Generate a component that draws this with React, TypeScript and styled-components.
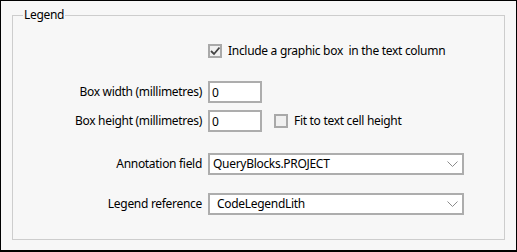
import React, { useState } from 'react';
import styled, { createGlobalStyle } from 'styled-components';

const GlobalStyle = createGlobalStyle`
  html, body {
    margin: 0;
    padding: 0;
    background: #f7f7f7;
  }
  body {
    font-family: "Noto Sans", "Open Sans", sans-serif;
    font-size: 12px;
    letter-spacing: -0.3px;
    color: #000;
  }
`;

const Window = styled.div`
  box-sizing: border-box;
  width: 517px;
  height: 252px;
  border: 1px solid #000;
  border-bottom-width: 2px;
  background: #f7f7f7;
  padding: 6px 11px 10px 11px;
  display: flex;
  flex-direction: column;
`;

const GroupBox = styled.fieldset`
  flex: 1;
  margin: 0;
  padding: 0;
  min-width: 0;
  border: 1px solid #cdcdcd;
  display: flex;
  flex-direction: column;
`;

const GroupTitle = styled.legend`
  margin-left: 10px;
  padding: 0 1px;
  line-height: 16px;
  font-size: 12px;
`;

const Row = styled.div<{ $top: number }>`
  display: grid;
  grid-template-columns: 189px auto;
  column-gap: 6px;
  align-items: center;
  margin-top: ${p => p.$top}px;
`;

const Label = styled.label`
  text-align: right;
  white-space: nowrap;
  line-height: 16px;
`;

const Controls = styled.div`
  display: flex;
  align-items: center;
`;

const CheckLabel = styled.label<{ $indent?: number }>`
  display: flex;
  align-items: center;
  gap: 6px;
  margin-left: ${p => p.$indent || 0}px;
  white-space: pre;
  line-height: 16px;
  cursor: default;
`;

const CheckBox = styled.span`
  box-sizing: border-box;
  width: 14px;
  height: 14px;
  border: 2px solid #a9a9a9;
  background: #f0f0f0;
  display: flex;
  align-items: center;
  justify-content: center;
  flex: none;
`;

const TextInput = styled.input`
  box-sizing: border-box;
  width: 54px;
  height: 22px;
  border: 2px solid #adadad;
  background: #fff;
  padding: 0 2px;
  font: inherit;
  letter-spacing: inherit;
  color: #000;
  outline: none;
`;

const Combo = styled.div<{ $pad: number }>`
  box-sizing: border-box;
  width: 256px;
  height: 22px;
  border: 2px solid #adadad;
  background: #fff;
  display: flex;
  align-items: center;
  padding-left: ${p => p.$pad}px;
  padding-right: 4px;
`;

const ComboText = styled.span`
  flex: 1;
  line-height: 16px;
`;

const Chevron = () => (
  <svg width="11" height="6" viewBox="0 0 11 6">
    <path d="M0.5 0.5 L5.5 5.5 L10.5 0.5" fill="none" stroke="#8c8c8c" strokeWidth="1" />
  </svg>
);

const Tick = () => (
  <svg width="10" height="10" viewBox="0 0 10 10">
    <path d="M1 5 L4 8 L9.5 1.5" fill="none" stroke="#444" strokeWidth="1.8" />
  </svg>
);

const Check: React.FC<{ checked: boolean; onToggle: () => void; text: string; indent?: number }> = ({
  checked,
  onToggle,
  text,
  indent,
}) => (
  <CheckLabel $indent={indent} onClick={onToggle}>
    <CheckBox>{checked && <Tick />}</CheckBox>
    <span>{text}</span>
  </CheckLabel>
);

export default function App() {
  const [includeBox, setIncludeBox] = useState(true);
  const [fitCell, setFitCell] = useState(false);
  const [width, setWidth] = useState('0');
  const [height, setHeight] = useState('0');

  return (
    <>
      <GlobalStyle />
      <Window>
        <GroupBox>
          <GroupTitle>Legend</GroupTitle>
          <Row $top={20}>
            <span />
            <Controls>
              <Check
                checked={includeBox}
                onToggle={() => setIncludeBox(!includeBox)}
                text="Include a graphic box  in the text column"
              />
            </Controls>
          </Row>
          <Row $top={22}>
            <Label>Box width (millimetres)</Label>
            <Controls>
              <TextInput value={width} onChange={e => setWidth(e.target.value)} />
            </Controls>
          </Row>
          <Row $top={7}>
            <Label>Box height (millimetres)</Label>
            <Controls>
              <TextInput value={height} onChange={e => setHeight(e.target.value)} />
              <Check
                checked={fitCell}
                onToggle={() => setFitCell(!fitCell)}
                text="Fit to text cell height"
                indent={12}
              />
            </Controls>
          </Row>
          <Row $top={21}>
            <Label>Annotation field</Label>
            <Controls>
              <Combo $pad={3}>
                <ComboText>QueryBlocks.PROJECT</ComboText>
                <Chevron />
              </Combo>
            </Controls>
          </Row>
          <Row $top={18}>
            <Label>Legend reference</Label>
            <Controls>
              <Combo $pad={7}>
                <ComboText>CodeLegendLith</ComboText>
                <Chevron />
              </Combo>
            </Controls>
          </Row>
        </GroupBox>
      </Window>
    </>
  );
}
